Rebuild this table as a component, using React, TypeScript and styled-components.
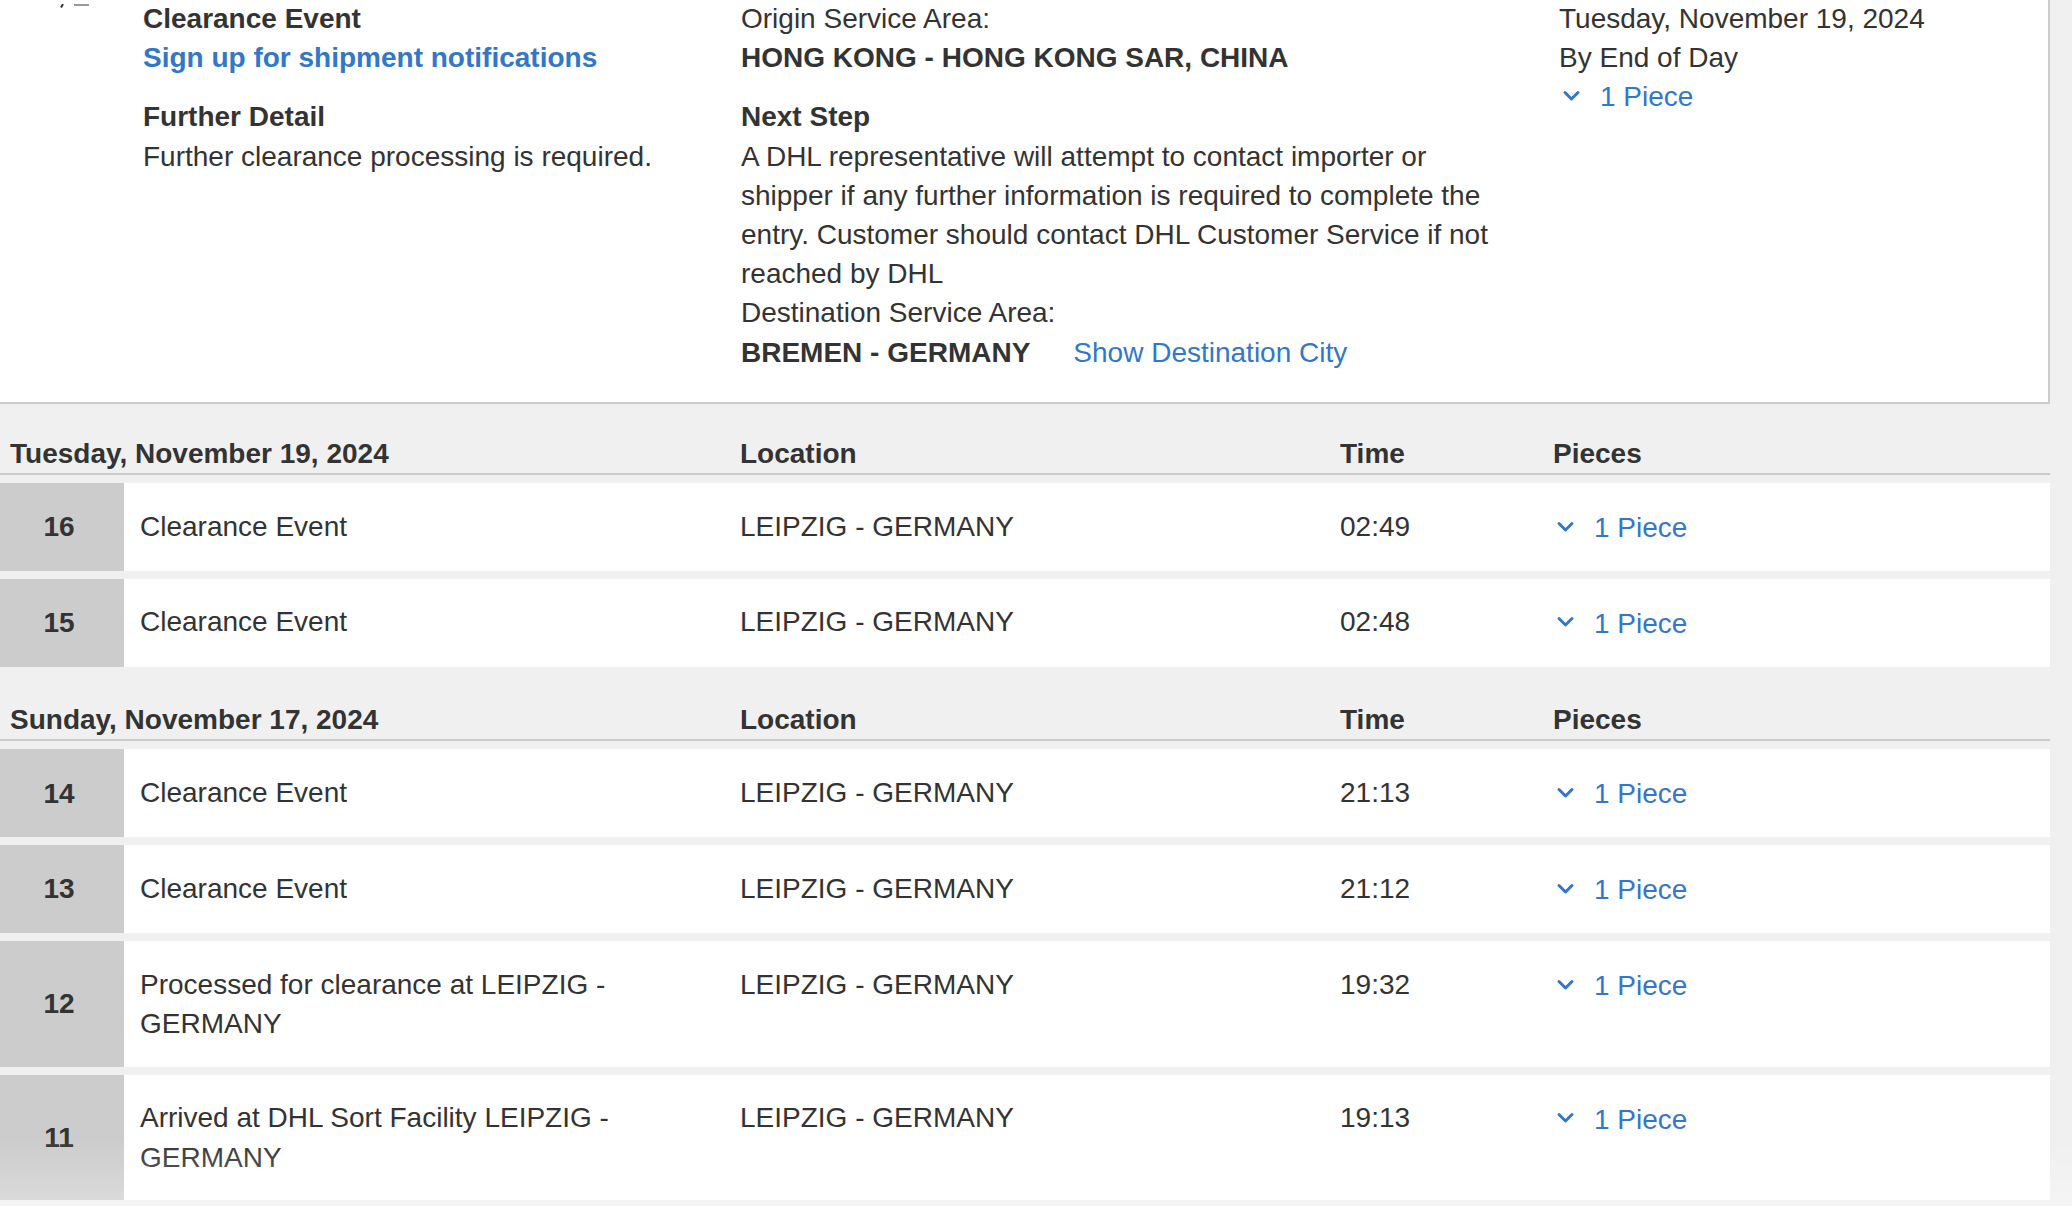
import React from "react";
import styled, { createGlobalStyle } from "styled-components";

const GlobalStyle = createGlobalStyle`
  html, body {
    margin: 0;
    padding: 0;
    background: #f0f0f0;
  }
  body {
    font-family: "Liberation Sans", Arial, sans-serif;
    font-size: 28px;
    line-height: 1.4;
    color: #333;
    overflow: hidden;
  }
`;

type Event = { n: number; text: string; location: string; time: string };
type Day = { date: string; events: Event[] };

const days: Day[] = [
  {
    date: "Tuesday, November 19, 2024",
    events: [
      { n: 16, text: "Clearance Event", location: "LEIPZIG - GERMANY", time: "02:49" },
      { n: 15, text: "Clearance Event", location: "LEIPZIG - GERMANY", time: "02:48" },
    ],
  },
  {
    date: "Sunday, November 17, 2024",
    events: [
      { n: 14, text: "Clearance Event", location: "LEIPZIG - GERMANY", time: "21:13" },
      { n: 13, text: "Clearance Event", location: "LEIPZIG - GERMANY", time: "21:12" },
      { n: 12, text: "Processed for clearance at LEIPZIG - GERMANY", location: "LEIPZIG - GERMANY", time: "19:32" },
      { n: 11, text: "Arrived at DHL Sort Facility LEIPZIG - GERMANY", location: "LEIPZIG - GERMANY", time: "19:13" },
    ],
  },
];

const Chevron = () => (
  <svg width="24" height="16" viewBox="0 0 24 16">
    <path d="M6 3.5 L12.5 10 L19 3.5" fill="none" stroke="currentColor" strokeWidth="3" strokeLinecap="round" strokeLinejoin="round" />
  </svg>
);

const Pieces = () => (
  <PieceLink>
    <Chevron />
    <span>1 Piece</span>
  </PieceLink>
);

export default function App() {
  return (
    <Page>
      <GlobalStyle />
      <Panel>
        <Gutter>
          <svg width="40" height="4" viewBox="0 0 40 4">
            <path d="M5 0 L3 3.5" stroke="#333" strokeWidth="2" />
            <rect x="16" y="0" width="15" height="2" fill="#999" />
          </svg>
        </Gutter>
        <Col>
          <Strong>Clearance Event</Strong>
          <BoldLink>Sign up for shipment notifications</BoldLink>
          <Spacer />
          <Strong>Further Detail</Strong>
          <Line>Further clearance processing is required.</Line>
        </Col>
        <Col>
          <Line>Origin Service Area:</Line>
          <Strong>HONG KONG - HONG KONG SAR, CHINA</Strong>
          <Spacer />
          <Strong>Next Step</Strong>
          <Para>
            A DHL representative will attempt to contact importer or shipper if any further information is required to
            complete the entry. Customer should contact DHL Customer Service if not reached by DHL
          </Para>
          <Line>Destination Service Area:</Line>
          <Line>
            <b>BREMEN - GERMANY</b>
            <CityLink>Show Destination City</CityLink>
          </Line>
        </Col>
        <Col>
          <Line>Tuesday, November 19, 2024</Line>
          <Line>By End of Day</Line>
          <Pieces />
        </Col>
      </Panel>

      <Timeline>
        {days.map((day) => (
          <Group key={day.date}>
            <GroupHead>
              <DateLabel>{day.date}</DateLabel>
              <span>Location</span>
              <span>Time</span>
              <span>Pieces</span>
            </GroupHead>
            {day.events.map((ev) => (
              <Row key={ev.n}>
                <Num>{ev.n}</Num>
                <Desc>{ev.text}</Desc>
                <Cell>{ev.location}</Cell>
                <Cell>{ev.time}</Cell>
                <Cell>
                  <Pieces />
                </Cell>
              </Row>
            ))}
          </Group>
        ))}
      </Timeline>
      <Fade />
    </Page>
  );
}

const Page = styled.div`
  width: 2050px;
`;

const Panel = styled.section`
  box-sizing: border-box;
  width: 2050px;
  margin-top: -1px;
  padding-bottom: 30px;
  background: #fff;
  border-right: 2px solid #ccc;
  border-bottom: 2px solid #ccc;
  display: grid;
  grid-template-columns: 143px 598px 818px 1fr;
`;

const Gutter = styled.div`
  padding-left: 58px;
  line-height: 0;
  svg {
    margin-top: 1px;
  }
`;

const Col = styled.div`
  display: flex;
  flex-direction: column;
  align-items: flex-start;
`;

const Strong = styled.div`
  font-weight: bold;
`;

const Line = styled.div`
  white-space: nowrap;
`;

const Para = styled.div`
  max-width: 770px;
`;

const Spacer = styled.div`
  height: 20px;
`;

const BoldLink = styled.a`
  color: #3277c8;
  font-weight: bold;
  text-decoration: none;
  cursor: pointer;
`;

const CityLink = styled.a`
  color: #3277c8;
  margin-left: 43px;
  text-decoration: none;
  cursor: pointer;
`;

const PieceLink = styled.a`
  display: inline-flex;
  align-items: center;
  gap: 17px;
  color: #3277c8;
  text-decoration: none;
  cursor: pointer;
  svg {
    flex: none;
  }
`;

const Timeline = styled.div`
  padding-top: 4px;
`;

const Group = styled.div`
  padding-top: 26px;
  & + & {
    padding-top: 25.5px;
  }
`;

const columns = "124px 616px 600px 213px 1fr";

const GroupHead = styled.div`
  display: grid;
  grid-template-columns: ${columns};
  border-bottom: 2px solid #ccc;
  margin-bottom: 8px;
  font-weight: bold;
`;

const DateLabel = styled.span`
  grid-column: 1 / 3;
  padding-left: 10px;
`;

const Row = styled.div`
  display: grid;
  grid-template-columns: ${columns};
  background: #fff;
  margin-bottom: 8px;
`;

const Num = styled.div`
  background: #ccc;
  display: flex;
  align-items: center;
  justify-content: center;
  padding-right: 6px;
  font-weight: bold;
`;

const Cell = styled.div`
  padding: 23.75px 0 23.5px;
`;

const Desc = styled(Cell)`
  padding-left: 16px;
`;

const Fade = styled.div`
  position: fixed;
  left: 0;
  right: 0;
  bottom: 0;
  height: 70px;
  pointer-events: none;
  background: linear-gradient(to bottom, rgba(255, 255, 255, 0), rgba(255, 255, 255, 0.3));
`;
